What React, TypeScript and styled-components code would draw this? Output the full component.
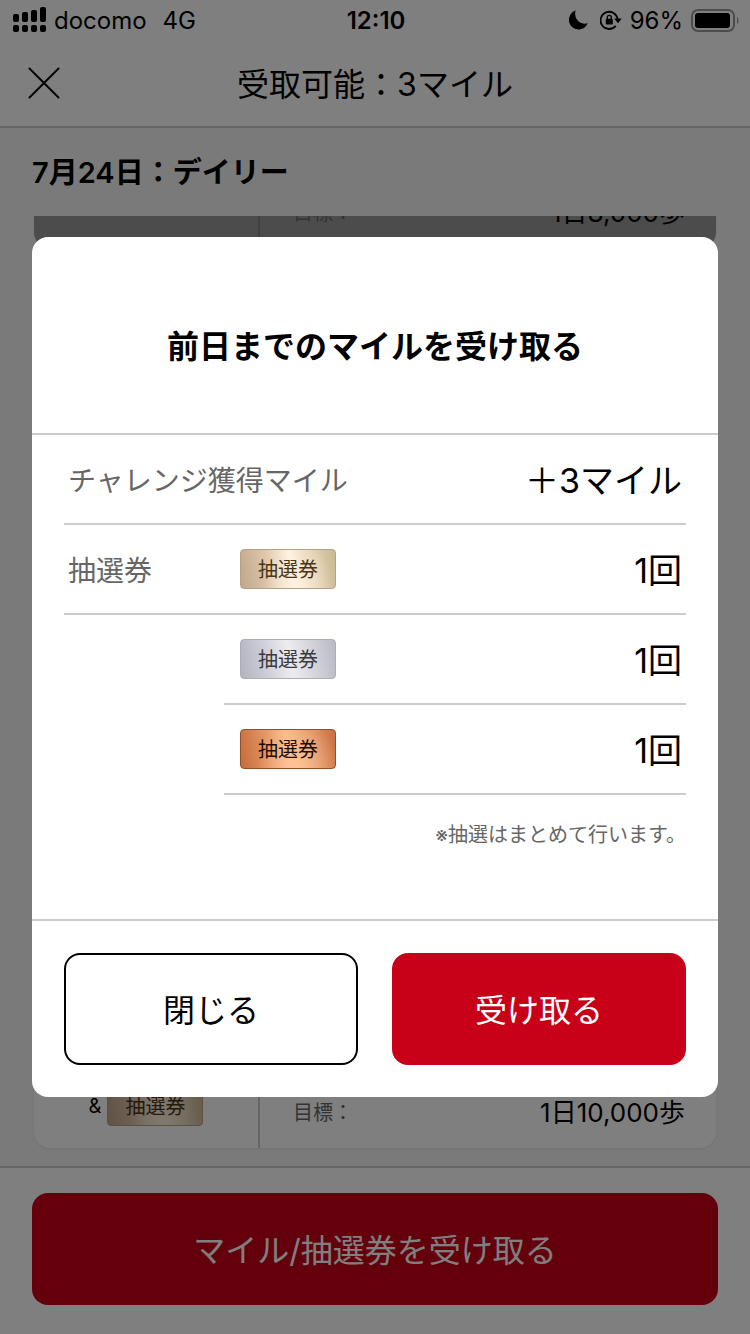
import React from "react";
import styled, { createGlobalStyle, css } from "styled-components";

const GlobalStyle = createGlobalStyle`
  *, *::before, *::after { box-sizing: border-box; }
  body {
    margin: 0;
    background: #f4f4f4;
    color: #000;
    font-family: Inter, "Noto Sans CJK JP", sans-serif;
  }
  h1, h2, p { margin: 0; }
  button { font-family: inherit; cursor: pointer; }
`;

const Screen = styled.div`
  display: flex;
  flex-direction: column;
  min-height: 100vh;
`;

/* ---------- status bar ---------- */

const StatusBar = styled.div`
  display: grid;
  grid-template-columns: 1fr auto 1fr;
  align-items: center;
  height: 40px;
  padding: 0 10px 0 12px;
  background: #fff;
`;

const StatusGroup = styled.div<{ $end?: boolean }>`
  display: flex;
  align-items: center;
  gap: 8px;
  justify-content: ${(p) => (p.$end ? "flex-end" : "flex-start")};
`;

const StatusText = styled.span<{ $bold?: boolean }>`
  padding-top: 2px;
  font-size: 24px;
  line-height: 38px;
  font-weight: ${(p) => (p.$bold ? 600 : 400)};
`;

const Network = styled(StatusText)`
  margin-left: 8px;
`;

const SignalIcon = () => (
  <svg width="34" height="26" viewBox="0 0 34 26" aria-hidden="true">
    <rect x="1" y="7" width="6" height="8" rx="2" />
    <rect x="10" y="5" width="6" height="10" rx="2" />
    <rect x="19" y="3" width="6" height="12" rx="2" />
    <rect x="28" y="0" width="6" height="15" rx="2" />
    <rect x="1" y="18" width="6" height="7" rx="2" />
    <rect x="10" y="18" width="6" height="7" rx="2" />
    <rect x="19" y="18" width="6" height="7" rx="2" />
    <rect x="28" y="18" width="6" height="7" rx="2" />
  </svg>
);

const Moon = styled.svg`
  margin-right: 4px;
`;

const MoonIcon = () => (
  <Moon width="19" height="20" viewBox="0 0 19 20" aria-hidden="true">
    <path d="M6.600 .6A9.700 9.700 0 1 0 18.700 13.200C11 15.400 4.400 9 6.600 .6Z" />
  </Moon>
);

const RotationLockIcon = () => (
  <svg width="22" height="20" viewBox="0 0 22 20" aria-hidden="true">
    <path
      d="M15.800 15.900A8.600 8.600 0 1 1 17.700 9.200"
      fill="none"
      stroke="#000"
      strokeWidth="1.800"
    />
    <path d="M14.200 8.400H21.800L18 13.200Z" />
    <rect x="5.800" y="8.800" width="7" height="5.600" rx="1" />
    <path
      d="M7.300 9.200V7.400a2 2 0 0 1 4 0v1.800"
      fill="none"
      stroke="#000"
      strokeWidth="1.400"
    />
  </svg>
);

const BatteryIcon = () => (
  <svg width="49" height="24" viewBox="0 0 49 24" aria-hidden="true">
    <rect
      x="1"
      y="2"
      width="42"
      height="21"
      rx="6"
      fill="none"
      stroke="#999"
      strokeWidth="2"
    />
    <rect x="4" y="5" width="35" height="15" rx="3" />
    <path d="M46 9c2 .8 2 6.200 0 7Z" fill="#999" />
  </svg>
);

/* ---------- header ---------- */

const Header = styled.header`
  display: grid;
  grid-template-columns: 64px 1fr 64px;
  align-items: center;
  height: 88px;
  padding: 0 12px;
  background: #fff;
  border-bottom: 2px solid #ccc;
`;

const CloseButton = styled.button`
  display: flex;
  align-items: center;
  justify-content: center;
  height: 64px;
  padding: 0;
  border: 0;
  background: none;
`;

const HeaderTitle = styled.h1`
  padding-top: 4px;
  font-size: 32px;
  line-height: 48px;
  font-weight: 400;
  text-align: center;
`;

/* ---------- challenge list ---------- */

const Main = styled.main`
  flex: 1;
  display: flex;
  flex-direction: column;
`;

const DayTitle = styled.h2`
  padding: 25px 32px 23px;
  font-size: 29px;
  line-height: 40px;
  font-weight: 600;
`;

const ChallengeList = styled.div`
  flex: 1;
  display: flex;
  flex-direction: column;
  justify-content: space-between;
  padding: 0 34px 18px;
`;

const ChallengeCard = styled.article<{ $done?: boolean }>`
  display: flex;
  align-items: flex-end;
  overflow: hidden;
  height: ${(p) => (p.$done ? "32px" : "224px")};
  border-radius: ${(p) => (p.$done ? "0 0 16px 16px" : "16px")};
  background: ${(p) => (p.$done ? "#999" : "#fff")};
  box-shadow: 0 1px 2px rgba(0, 0, 0, 0.08);
`;

const Reward = styled.div<{ $done?: boolean }>`
  display: flex;
  align-items: flex-end;
  justify-content: center;
  gap: 6px;
  width: 226px;
  height: 100%;
  padding-bottom: 22px;
  border-right: 2px solid ${(p) => (p.$done ? "#808080" : "#ccc")};
  font-size: 20px;
  line-height: 40px;
`;

const Goal = styled.div`
  flex: 1;
  display: flex;
  align-items: center;
  justify-content: space-between;
  padding: 0 31px 19px 33px;
  line-height: 32px;
`;

const GoalLabel = styled.span`
  font-size: 20px;
  color: #666;
`;

const GoalValue = styled.span`
  font-size: 26px;
`;

const BottomBar = styled.footer`
  display: grid;
  padding: 25px 32px 29px;
  border-top: 2px solid #ccc;
  background: #fff;
`;

/* ---------- shared ---------- */

const ActionButton = styled.button<{ $outline?: boolean }>`
  height: 112px;
  padding: 4px 0 0;
  border-radius: 16px;
  font-size: 32px;
  line-height: 48px;
  ${(p) =>
    p.$outline
      ? css`
          border: 2px solid #000;
          background: #fff;
          color: #000;
        `
      : css`
          border: 0;
          background: #c80018;
          color: #fff;
        `}
`;

type Grade = "gold" | "silver" | "bronze";

const ticketLook: Record<Grade, ReturnType<typeof css>> = {
  gold: css`
    border-color: #b5a283;
    color: #4a3517;
    background:
      radial-gradient(ellipse 34px 56px at 60% 100%, rgba(255, 240, 222, 0.9), transparent),
      linear-gradient(80deg, #c0a68c 0%, #dcc5a9 28%, #f3e2cc 46%, #fff4e6 54%, #e8d7b8 68%, #cbb995 100%);
  `,
  silver: css`
    border-color: #adadb8;
    color: #3a3a40;
    background: linear-gradient(80deg, #b3b3c0 0%, #cfcfd8 28%, #ededf0 52%, #d9d9df 70%, #b9b9c4 100%);
  `,
  bronze: css`
    border-color: #8f5228;
    color: #1f0d02;
    background:
      radial-gradient(ellipse 40px 50px at 60% 100%, rgba(255, 200, 154, 0.8), transparent),
      linear-gradient(80deg, #c66b3c 0%, #e0905f 26%, #f8bb8c 50%, #e39a6b 72%, #c96f43 100%);
  `,
};

const Ticket = styled.span<{ $grade: Grade }>`
  display: flex;
  align-items: center;
  justify-content: center;
  width: 96px;
  height: 40px;
  padding-top: 2px;
  border: 1px solid;
  border-radius: 4px;
  font-size: 20px;
  line-height: 36px;
  ${(p) => ticketLook[p.$grade]}
`;

/* ---------- dialog ---------- */

const Overlay = styled.div`
  position: fixed;
  inset: 0;
  display: flex;
  align-items: center;
  padding: 0 32px;
  background: rgba(0, 0, 0, 0.5);
`;

const Dialog = styled.section`
  flex: 1;
  border-radius: 16px;
  background: #fff;
`;

const DialogTitle = styled.h2`
  padding: 86px 32px 62px;
  border-bottom: 2px solid #ccc;
  font-size: 32px;
  line-height: 48px;
  font-weight: 700;
  text-align: center;
`;

const DialogBody = styled.div`
  padding: 0 32px;
`;

const Row = styled.div<{ $indent?: boolean }>`
  display: flex;
  align-items: center;
  height: 90px;
  margin-left: ${(p) => (p.$indent ? "160px" : "0")};
  padding: 0 4px 0 ${(p) => (p.$indent ? "16px" : "4px")};
  border-bottom: 2px solid #ccc;
`;

const RowLabel = styled.span<{ $column?: boolean }>`
  width: ${(p) => (p.$column ? "172px" : "auto")};
  padding-top: 3px;
  font-size: 28px;
  line-height: 40px;
  color: #666;
`;

const RowValue = styled.span`
  margin-left: auto;
  padding-top: 3px;
  font-size: 34px;
  line-height: 48px;
`;

const Note = styled.p`
  padding: 26px 0 70px;
  font-size: 20px;
  line-height: 28px;
  color: #666;
  text-align: right;
`;

const DialogActions = styled.div`
  display: grid;
  grid-template-columns: 1fr 1fr;
  gap: 34px;
  padding: 32px;
  border-top: 2px solid #ccc;
`;

export default function App() {
  return (
    <>
      <GlobalStyle />
      <Screen>
        <StatusBar>
          <StatusGroup>
            <SignalIcon />
            <StatusText>docomo</StatusText>
            <Network>4G</Network>
          </StatusGroup>
          <StatusText $bold>12:10</StatusText>
          <StatusGroup $end>
            <MoonIcon />
            <RotationLockIcon />
            <StatusText>96%</StatusText>
            <BatteryIcon />
          </StatusGroup>
        </StatusBar>

        <Header>
          <CloseButton type="button" aria-label="閉じる">
            <svg width="32" height="32" viewBox="0 0 32 32" aria-hidden="true">
              <path
                d="M1.500 1.500 30.500 30.500M30.500 1.500 1.500 30.500"
                stroke="#000"
                strokeWidth="2"
                strokeLinecap="round"
              />
            </svg>
          </CloseButton>
          <HeaderTitle>受取可能：3マイル</HeaderTitle>
        </Header>

        <Main>
          <DayTitle>7月24日：デイリー</DayTitle>
          <ChallengeList>
            <ChallengeCard $done>
              <Reward $done />
              <Goal>
                <GoalLabel>目標：</GoalLabel>
                <GoalValue>1日8,000歩</GoalValue>
              </Goal>
            </ChallengeCard>
            <ChallengeCard>
              <Reward>
                <span>&amp;</span>
                <Ticket $grade="gold">抽選券</Ticket>
              </Reward>
              <Goal>
                <GoalLabel>目標：</GoalLabel>
                <GoalValue>1日10,000歩</GoalValue>
              </Goal>
            </ChallengeCard>
          </ChallengeList>
        </Main>

        <BottomBar>
          <ActionButton type="button">マイル/抽選券を受け取る</ActionButton>
        </BottomBar>
      </Screen>

      <Overlay>
        <Dialog role="dialog" aria-modal="true" aria-labelledby="dialog-title">
          <DialogTitle id="dialog-title">前日までのマイルを受け取る</DialogTitle>
          <DialogBody>
            <Row>
              <RowLabel>チャレンジ獲得マイル</RowLabel>
              <RowValue>＋3マイル</RowValue>
            </Row>
            <Row>
              <RowLabel $column>抽選券</RowLabel>
              <Ticket $grade="gold">抽選券</Ticket>
              <RowValue>1回</RowValue>
            </Row>
            <Row $indent>
              <Ticket $grade="silver">抽選券</Ticket>
              <RowValue>1回</RowValue>
            </Row>
            <Row $indent>
              <Ticket $grade="bronze">抽選券</Ticket>
              <RowValue>1回</RowValue>
            </Row>
            <Note>※抽選はまとめて行います。</Note>
          </DialogBody>
          <DialogActions>
            <ActionButton type="button" $outline>
              閉じる
            </ActionButton>
            <ActionButton type="button">受け取る</ActionButton>
          </DialogActions>
        </Dialog>
      </Overlay>
    </>
  );
}
